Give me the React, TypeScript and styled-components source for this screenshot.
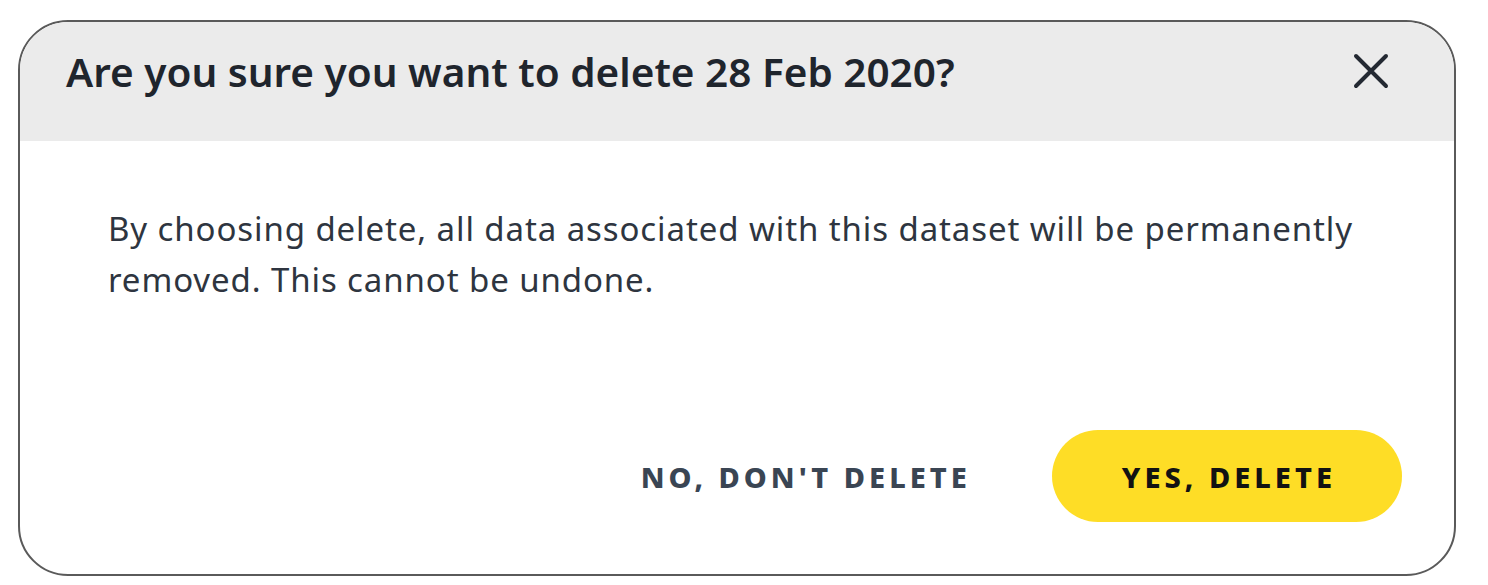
import styled, { createGlobalStyle } from "styled-components";

const Global = createGlobalStyle`
  html, body {
    margin: 0;
    padding: 0;
    background: #ffffff;
    font-family: "Noto Sans", Lato, sans-serif;
  }
`;

const Page = styled.div`
  padding: 20px 0 0 18px;
`;

const Dialog = styled.div`
  width: 1438px;
  height: 556px;
  box-sizing: border-box;
  border: 2px solid #5a5a5a;
  border-radius: 50px;
  overflow: hidden;
  display: flex;
  flex-direction: column;
  background: #ffffff;
`;

const Header = styled.div`
  height: 119px;
  background: #ebebeb;
  display: flex;
  align-items: flex-start;
  justify-content: space-between;
  padding: 24px 64px 0 46px;
  box-sizing: border-box;
`;

const Title = styled.h2`
  margin: 0;
  font-size: 40.5px;
  font-weight: 600;
  color: #1f252d;
  line-height: 52px;
`;

const CloseButton = styled.button`
  border: none;
  background: none;
  padding: 0;
  margin-top: 6px;
  width: 38px;
  height: 38px;
  cursor: pointer;
`;

const Body = styled.div`
  flex: 1;
  display: flex;
  flex-direction: column;
  padding: 62px 52px 52px 88px;
`;

const Message = styled.p`
  margin: 0;
  font-size: 33px;
  letter-spacing: 0.9px;
  line-height: 51px;
  color: #2e3540;
  max-width: 1280px;
`;

const Actions = styled.div`
  margin-top: auto;
  display: flex;
  justify-content: flex-end;
  align-items: center;
  gap: 81px;
`;

const ActionButton = styled.button<{ $primary?: boolean }>`
  font-family: "Noto Sans", Lato, sans-serif;
  font-size: 29px;
  font-weight: 800;
  letter-spacing: 4px;
  border: none;
  cursor: pointer;
  height: 92px;
  border-radius: 46px;
  padding: ${(p) => (p.$primary ? "0 66px 0 70px" : "0")};
  background: ${(p) => (p.$primary ? "#fedd26" : "transparent")};
  color: ${(p) => (p.$primary ? "#121212" : "#3a4553")};
`;

export default function App() {
  return (
    <Page>
      <Global />
      <Dialog>
        <Header>
          <Title>Are you sure you want to delete 28 Feb 2020?</Title>
          <CloseButton aria-label="Close">
            <svg width="38" height="38" viewBox="0 0 38 38">
              <path
                d="M4 4 L34 34 M34 4 L4 34"
                stroke="#232932"
                strokeWidth="4"
                strokeLinecap="round"
              />
            </svg>
          </CloseButton>
        </Header>
        <Body>
          <Message>
            By choosing delete, all data associated with this dataset will be
            permanently removed. This cannot be undone.
          </Message>
          <Actions>
            <ActionButton>NO, DON'T DELETE</ActionButton>
            <ActionButton $primary>YES, DELETE</ActionButton>
          </Actions>
        </Body>
      </Dialog>
    </Page>
  );
}
